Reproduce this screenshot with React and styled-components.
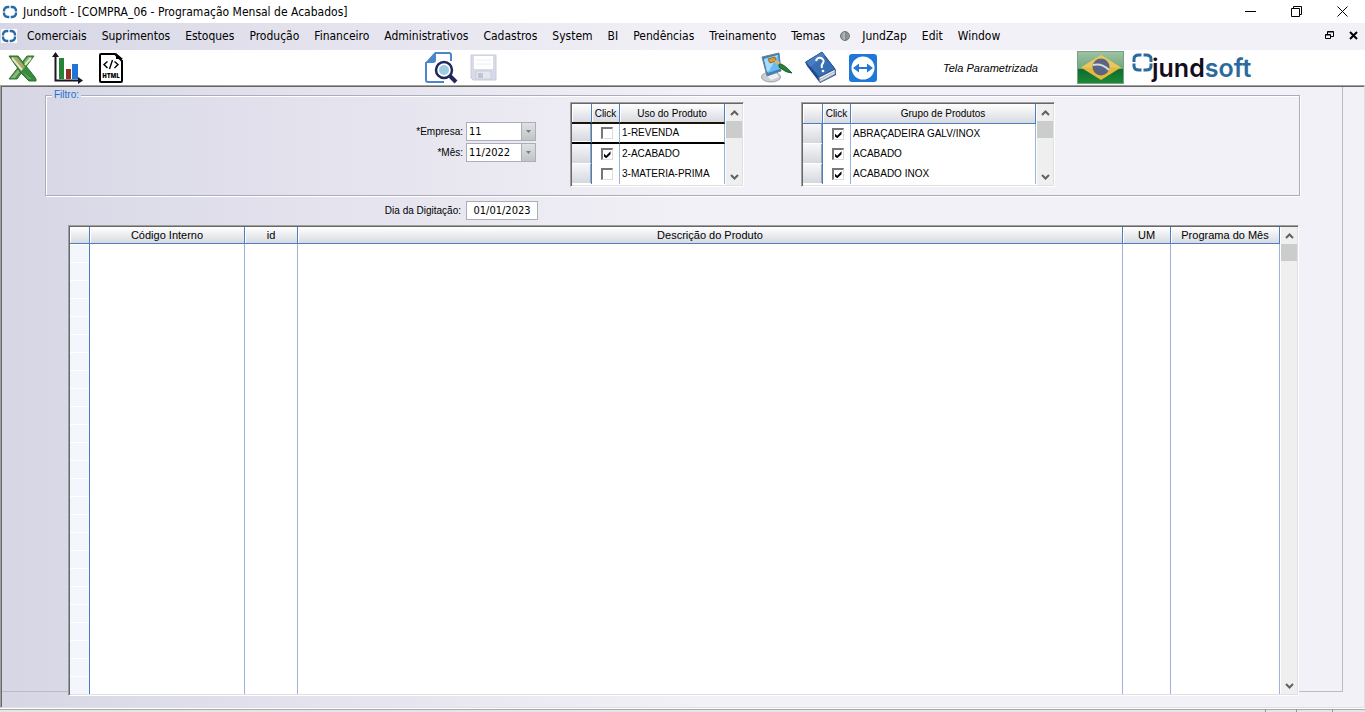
import React, { useState } from 'react';
import styled, { createGlobalStyle, css } from 'styled-components';

const uiFont = '"DejaVu Sans Condensed", "Open Sans", sans-serif';
const formFont = '"Liberation Sans", Arial, sans-serif';
const haze = 'linear-gradient(to right, #d7d6e5 0, #f2f1f7 700px)';

const GlobalStyle = createGlobalStyle`
  *, *::before, *::after { box-sizing: border-box; }
  html, body { margin: 0; background: #fff; }
  button, input, select { font: inherit; color: inherit; margin: 0; }
  button { border: 0; padding: 0; background: none; }
`;

const Window = styled.div`
  display: flex;
  flex-direction: column;
  min-height: 100vh;
  color: #000;
  font: 12px/16px ${uiFont};
`;

const TitleBar = styled.header`
  display: flex;
  align-items: center;
  height: 23px;
  padding-left: 2px;
  gap: 5px;
  background: #fff;
`;

const Title = styled.h1`
  flex: 1;
  margin: 0;
  font-size: 12px;
  font-weight: 400;
  white-space: nowrap;
`;

const WindowControls = styled.div`
  display: flex;
`;

const WindowButton = styled.button`
  display: grid;
  place-items: center;
  width: ${(p) => (p.$small ? '24px' : '46px')};
  height: 20px;
`;

const MenuBar = styled.nav`
  display: flex;
  align-items: center;
  height: 27px;
  padding: 0 0 2px 1px;
  background: ${haze};
`;

const MenuList = styled.div`
  display: flex;
  flex: 1;
  gap: 15px;
  padding-left: 10px;
  white-space: nowrap;
`;

const MenuIcon = styled.span`
  display: flex;
  background: #fff;
`;

const MenuItem = styled.button`
  display: flex;
  align-items: center;
  gap: 12px;
`;

const Dot = styled.span`
  width: 10px;
  height: 10px;
  border: 1px solid #6d7272;
  border-radius: 50%;
  background: linear-gradient(to right, #8d9292, #b9bdbd 50%, #7f8484 51%, #9a9e9e);
`;

const Toolbar = styled.div`
  display: grid;
  grid-template-columns: 417fr 336fr 182fr 134fr 288fr;
  align-items: center;
  height: 35px;
  padding-left: 8px;
  background: #fff;
`;

const ToolGroup = styled.div`
  display: flex;
  align-items: center;
  gap: ${(p) => p.$gap || '12px'};
`;

const ToolButton = styled.button`
  display: flex;
`;

const ScreenTag = styled.em`
  font: italic 11px/14px ${formFont};
  white-space: nowrap;
`;

const Workspace = styled.main`
  display: flex;
  flex: 1;
  padding: 1px 21px 15px 1px;
  border: 1px solid;
  border-color: #a0a0a0 #e0e0e0 #e0e0e0 #a0a0a0;
  box-shadow: inset 1px 1px 0 #656865;
  background: ${haze};
`;

const FormPage = styled.form`
  display: flex;
  flex: 1;
  flex-direction: column;
  min-width: 0;
  padding-top: 1px;
  border: solid #bbbbc1;
  border-width: 0 1px 1px 0;
  font: 10px/14px ${formFont};
`;

const Filter = styled.fieldset`
  height: 108px;
  min-width: 0;
  margin: 0 42px 0 43px;
  padding: 0;
  border: 1px solid #a9aeb8;
  box-shadow: 1px 1px 0 #fff, inset 1px 1px 0 #fff;
`;

const Legend = styled.legend`
  margin-left: 6px;
  padding: 0 2px;
  background: #d9d8e6;
  color: #1b6fd0;
  font-size: 10px;
`;

const FilterBody = styled.div`
  display: flex;
  gap: 57px;
`;

const Fields = styled.div`
  display: flex;
  flex-direction: column;
  gap: 2px;
  width: 490px;
  margin: 20px -23px 0 0;
`;

const FieldRow = styled.div`
  display: grid;
  grid-template-columns: ${(p) => (p.$page ? '459px 72px' : '417px 70px')};
  justify-content: ${(p) => (p.$page ? 'start' : 'end')};
  align-items: center;
  gap: ${(p) => (p.$page ? '5px' : '3px')};
  margin: ${(p) => (p.$page ? '5px 0' : '0')};
`;

const FieldLabel = styled.label`
  text-align: right;
  white-space: nowrap;
`;

const valueBox = css`
  width: 100%;
  height: 19px;
  border: 1px solid #a9aeb8;
  border-radius: 0;
  background: #fff;
  font: 11px/15px ${uiFont};
  outline: none;
`;

const TextInput = styled.input`
  ${valueBox}
  padding: 0;
  text-align: center;
`;

const SelectBox = styled.div`
  position: relative;
`;

const Select = styled.select`
  ${valueBox}
  display: block;
  padding: 0 0 0 2px;
  appearance: none;
`;

const SelectArrow = styled.span`
  position: absolute;
  top: 1px;
  right: 1px;
  bottom: 1px;
  display: grid;
  place-items: center;
  width: 14px;
  border-left: 1px solid #a9aeb8;
  background: linear-gradient(#dfe2e4, #bfc4c4);
  pointer-events: none;
`;

const sunken = css`
  padding: 1px;
  border: 1px solid;
  border-color: #a0a0a0 #fff #fff #a0a0a0;
  box-shadow: inset 1px 1px 0 #656865, inset -1px -1px 0 #e0e0e0;
`;

const SmallFrame = styled.div`
  ${sunken}
  display: flex;
  align-items: stretch;
  width: ${(p) => p.$width};
  height: 85px;
  background: #fff;
`;

const MainFrame = styled.div`
  ${sunken}
  position: relative;
  display: flex;
  flex: 1;
  min-height: 200px;
  margin: 0 43px -5px 66px;
  background: #fff;
`;

const Table = styled.table`
  flex: 1;
  width: 100%;
  min-width: 0;
  height: ${(p) => (p.$fill ? 'auto' : '80px')};
  table-layout: fixed;
  border-collapse: separate;
  border-spacing: 0;
  font-size: ${(p) => (p.$fill ? '11px' : '10px')};
`;

const Col = styled.col`
  width: ${(p) => p.$width};
`;

const HeadCell = styled.th`
  height: ${(p) => (p.$tall ? '20px' : '17px')};
  padding: 0;
  overflow: hidden;
  border-right: 1px solid #4a80c2;
  border-bottom: 1px solid #4a80c2;
  box-shadow: inset 1px 0 0 #fff;
  background: linear-gradient(#fff, #d8dae0);
  font-weight: 400;
  line-height: 15px;
  white-space: nowrap;
  ${(p) => p.$marked && 'border-bottom: 2px solid #1c1408;'}
`;

const BodyRow = styled.tr`
  height: 20px;
  & > td { border-bottom: ${(p) => (p.$marked ? '2px solid #000' : '0')}; }
`;

const Cell = styled.td`
  height: ${(p) => (p.$fill ? 'auto' : '20px')};
  padding: 0 0 0 2px;
  border-right: 1px solid #98b3dc;
  line-height: 14px;
  text-align: ${(p) => (p.$center ? 'center' : 'left')};
  white-space: nowrap;
`;

const SelectorCell = styled.td`
  padding: 0;
  border-right: 1px solid #4a80c2;
  background: linear-gradient(#f6f7f9, #d3d6dc);
  box-shadow: inset 0 -1px 0 #fff, inset -1px 0 0 #a0a3a8;
`;

const SelectorColumn = styled.td`
  padding: 0;
  border-right: 1px solid #4a80c2;
  background: repeating-linear-gradient(#fff 0, #fff 1px, #f3f6fc 1px, #f3f6fc 18px);
`;

const Checkbox = styled.input`
  display: inline-grid;
  place-items: center;
  width: 12px;
  height: 12px;
  vertical-align: middle;
  appearance: none;
  border: solid;
  border-width: 2px 1px 1px 2px;
  border-color: #74777b #dcdcdc #dcdcdc #74777b;
  background: #fff;
  &:checked::before {
    content: '';
    width: 7px;
    height: 7px;
    background: #000;
    clip-path: polygon(0 28%, 38% 62%, 100% 0, 100% 40%, 38% 100%, 0 68%);
  }
`;

const ScrollTrack = styled.div`
  display: flex;
  flex-direction: column;
  width: 17px;
  border-left: 1px solid #fff;
  background: #efefef;
`;

const ScrollButton = styled.button`
  display: grid;
  place-items: center;
  height: 17px;
`;

const ScrollThumb = styled.div`
  height: 17px;
  margin-bottom: auto;
  background: #cbcccc;
`;

const StatusBar = styled.footer`
  display: flex;
  justify-content: flex-end;
  height: 4px;
  border-top: 1px solid #fff;
  background: #e2e6e9;
  box-shadow: inset 0 1px 0 #a6abb0;
`;

const StatusPane = styled.span`
  width: ${(p) => p.$width};
  border-left: 1px solid #8f9499;
`;

const RingIcon = () => (
  <svg width="16" height="14" viewBox="0 0 16 14" fill="none" stroke="#286aa4" strokeWidth="2.4" aria-hidden="true">
    <path d="M7.300 2H6Q2 2 2 6v.5M8.700 2H10q4 0 4 4v.5M7.300 12H6q-4 0-4-4v-.5M8.700 12H10q4 0 4-4v-.5" />
  </svg>
);

const ExcelIcon = () => (
  <svg width="29" height="28" viewBox="0 0 29 28" aria-hidden="true">
    <path d="M19 2h7L9 25H1z" fill="#3f8d45" stroke="#2e7d36" />
    <path d="M20 3h4L7 24H3z" fill="#8fb57c" />
    <path d="M1 2h9l16 20 2 3v2h-7L13 19z" fill="#388a3d" stroke="#287030" />
    <path d="M3 3h6l8 10-4 4z" fill="#a5a86a" />
    <path d="M4 4l10 12M17 11l6-7" fill="none" stroke="#e8e4c0" strokeWidth="2" />
    <path d="M15 18l9 7h-4z" fill="#5aa552" />
  </svg>
);

const ChartIcon = () => (
  <svg width="31" height="33" viewBox="0 0 31 33" aria-hidden="true">
    <path d="M7 7h5v21H7z" fill="#238636" />
    <path d="M14 18h5v10h-5z" fill="#94301f" />
    <path d="M20 13h6v15h-6z" fill="#1f74da" />
    <path d="M3.500 4v25.500H27" fill="none" stroke="#1a1424" strokeWidth="2" />
    <path d="M0 6l3.500-5L7 6zM26 26l5 3.500-5 3.500z" fill="#1a1424" />
  </svg>
);

const HtmlIcon = () => (
  <svg width="26" height="32" viewBox="0 0 26 32" aria-hidden="true">
    <path d="M3 2h14l7 7v20q0 1-1 1H3q-1 0-1-1V3q0-1 1-1z" fill="#fff" stroke="#000" strokeWidth="2" />
    <path d="M18 1l7 6h-7z" fill="#000" />
    <path d="M9.500 9.500L6 12.500l3.500 3.500M16.500 9.500l3.500 3-3.500 3.500M14.500 8l-3 9" fill="none" stroke="#000" strokeWidth="1.400" />
    <text x="13" y="26" textAnchor="middle" fontFamily="Open Sans, sans-serif" fontSize="6" fontWeight="800">HTML</text>
  </svg>
);

const PreviewIcon = () => (
  <svg width="33" height="33" viewBox="0 0 33 33" aria-hidden="true">
    <path d="M10 2h14q2 0 2 2v6M19 31H3q-2 0-2-2V11" fill="none" stroke="#4b87ca" strokeWidth="2" />
    <path d="M0 12L10 1h1v8q0 3-3 3z" fill="#4b87ca" />
    <path d="M25 25l6 6" stroke="#20295c" strokeWidth="4" />
    <circle cx="19" cy="19" r="8" fill="#fff" stroke="#20295c" strokeWidth="2.500" />
    <circle cx="19" cy="19" r="5" fill="#9ecbe4" />
  </svg>
);

const SaveIcon = () => (
  <svg width="27" height="27" viewBox="0 0 27 27" aria-hidden="true">
    <path d="M1 1h25v25H3l-2-2z" fill="#d8dbe7" stroke="#c9cddb" />
    <path d="M4 2h19v13H4z" fill="#fff" />
    <path d="M6 6h15M6 10h15" stroke="#eceef4" />
    <path d="M6 17h15v8H6z" fill="#e5e7ee" stroke="#c9cddb" />
    <path d="M8 19h5v5H8z" fill="#c0c5d4" />
  </svg>
);

const PaintIcon = () => (
  <svg width="32" height="32" viewBox="0 0 32 32" aria-hidden="true">
    <ellipse cx="10" cy="25" rx="9.500" ry="5" fill="#cbd0d6" stroke="#9ba2aa" />
    <path d="M4 22l10-3 4 6-8 3z" fill="#eef0f3" />
    <path d="M1 5l17-4 2 18-14 5z" fill="#3a7fc0" stroke="#707e8b" />
    <path d="M3 7l14-4 2 14-12 4z" fill="#69baf4" />
    <path d="M3 7l14-4-9 16-2 1z" fill="#a8dcff" />
    <path d="M7 7l7-2 1 4-6 2z" fill="#d99d38" stroke="#996a20" />
    <path d="M14 9l7 5" stroke="#d9b383" strokeWidth="3" />
    <path d="M18 12q4-1 13 9-6 0-13-6z" fill="#26843a" stroke="#176327" />
  </svg>
);

const HelpBookIcon = () => (
  <svg width="32" height="33" viewBox="0 0 32 33" aria-hidden="true">
    <path d="M0 11L17 1l14 18v5L15 32 2 15z" fill="#1d4788" />
    <path d="M14 26l16-8v5l-15 8z" fill="#e5e8ed" stroke="#8c9aac" />
    <path d="M15 28.500l15-8" stroke="#a7b0bd" />
    <path d="M1 11L17 1l13 17-16 8z" fill="#376fb4" stroke="#24518f" />
    <path d="M1 11L17 1l3 4L5 16z" fill="#5c90cc" opacity=".5" />
    <path d="M11 10q1-4 5-3 4 2 2 5-2 2-1 5" fill="none" stroke="#fff" strokeWidth="2" />
    <circle cx="18" cy="20" r="1.300" fill="#fff" />
  </svg>
);

const RemoteIcon = () => (
  <svg width="28" height="28" viewBox="0 0 28 28" aria-hidden="true">
    <rect width="28" height="28" rx="3" fill="#1f77d8" />
    <circle cx="14" cy="14" r="11.500" fill="#fff" />
    <path d="M4 14l6-4.500V13h8V9.500l6 4.500-6 4.500V15h-8v3.500z" fill="#2278d6" />
  </svg>
);

const FlagIcon = () => (
  <svg width="47" height="33" viewBox="0 0 47 33" role="img" aria-label="Brasil">
    <defs>
      <linearGradient id="flag" x1="0" y1="0" x2="0" y2="1">
        <stop offset="0" stopColor="#9fc3a5" /><stop offset=".54" stopColor="#6fa77c" />
        <stop offset=".55" stopColor="#0f6b32" /><stop offset="1" stopColor="#1c8a34" />
      </linearGradient>
    </defs>
    <rect x=".5" y=".5" width="46" height="32" fill="url(#flag)" stroke="#79a283" />
    <path d="M24 4l20 12.500L24 29 4 16.500z" fill="#e6b83e" />
    <path d="M24 4l20 12.500H4z" fill="#e8c763" />
    <circle cx="24" cy="16" r="8.500" fill="#5c6580" />
    <path d="M16 14q9-2 16 5" fill="none" stroke="#d5dae2" strokeWidth="2" />
  </svg>
);

const LogoIcon = () => (
  <svg width="122" height="33" viewBox="0 0 122 33" role="img" aria-label="jundsoft">
    <path d="M9.500 4H7Q2 4 2 8v3M11.500 4H14q5 0 5 4v3M9.500 19H7q-5 0-5-4v-2.500M11.500 19H14q5 0 5-4v-2.500" fill="none" stroke="#2b6a9c" strokeWidth="3" />
    <text x="20" y="26" fontFamily="Inter, sans-serif" fontSize="25" fontWeight="600" fill="#120c1c">
      jund<tspan fill="#2b6a9c">soft</tspan>
    </text>
  </svg>
);

const Glyph = ({ d, size = 11, width = 1 }) => (
  <svg width={size} height={size} viewBox={`0 0 ${size} ${size}`} fill="none" stroke="#000" strokeWidth={width} aria-hidden="true">
    <path d={d} />
  </svg>
);

const Chevron = ({ down }) => (
  <svg width="9" height="6" viewBox="0 0 9 6" fill="none" stroke="#606060" strokeWidth="2" aria-hidden="true">
    <path d={down ? 'M1 1l3.500 3.500L8 1' : 'M1 5l3.500-3.500L8 5'} />
  </svg>
);

const Scrollbar = () => (
  <ScrollTrack>
    <ScrollButton type="button" aria-label="Rolar para cima"><Chevron /></ScrollButton>
    <ScrollThumb />
    <ScrollButton type="button" aria-label="Rolar para baixo"><Chevron down /></ScrollButton>
  </ScrollTrack>
);

const menus = ['Comerciais', 'Suprimentos', 'Estoques', 'Produção', 'Financeiro', 'Administrativos', 'Cadastros', 'System', 'BI', 'Pendências', 'Treinamento', 'Temas', 'JundZap', 'Edit', 'Window'];

const Combo = ({ id, label, value }) => (
  <FieldRow>
    <FieldLabel htmlFor={id}>{label}</FieldLabel>
    <SelectBox>
      <Select id={id} defaultValue={value}><option>{value}</option></Select>
      <SelectArrow>
        <svg width="5" height="3" viewBox="0 0 5 3" aria-hidden="true"><path d="M0 0h5L2.500 3z" fill="#777d80" /></svg>
      </SelectArrow>
    </SelectBox>
  </FieldRow>
);

const CheckGrid = ({ id, title, width, items, marked }) => {
  const [rows, setRows] = useState(items);
  const toggle = (n) => setRows(rows.map((r, i) => (i === n ? [r[0], !r[1]] : r)));
  return (
    <SmallFrame $width={width}>
      <Table>
        <colgroup><Col $width="20px" /><Col $width="28px" /><Col /></colgroup>
        <thead>
          <tr>
            <HeadCell $tall $marked={marked === 0} />
            <HeadCell $tall $marked={marked === 0}>Click</HeadCell>
            <HeadCell $tall $marked={marked === 0}>{title}</HeadCell>
          </tr>
        </thead>
        <tbody>
          {rows.map(([name, on], i) => (
            <BodyRow key={name} $marked={marked === i}>
              <SelectorCell />
              <Cell $center><Checkbox type="checkbox" id={`${id}${i}`} checked={on} onChange={() => toggle(i)} /></Cell>
              <Cell><label htmlFor={`${id}${i}`}>{name}</label></Cell>
            </BodyRow>
          ))}
        </tbody>
      </Table>
      <Scrollbar />
    </SmallFrame>
  );
};

export default function App() {
  return (
    <Window>
      <GlobalStyle />
      <TitleBar>
        <RingIcon />
        <Title>Jundsoft - [COMPRA_06 - Programação Mensal de Acabados]</Title>
        <WindowControls>
          <WindowButton aria-label="Minimizar"><Glyph d="M0 5.500h11" /></WindowButton>
          <WindowButton aria-label="Restaurar"><Glyph d="M.5 2.500h8v8h-8zM2.500 2.500v-2h8v8h-2" /></WindowButton>
          <WindowButton aria-label="Fechar"><Glyph d="M.5.5l10 10M10.500.5l-10 10" /></WindowButton>
        </WindowControls>
      </TitleBar>
      <MenuBar>
        <MenuIcon><RingIcon /></MenuIcon>
        <MenuList>
          {menus.map((m) => <MenuItem key={m}>{m === 'JundZap' && <Dot />}{m}</MenuItem>)}
        </MenuList>
        <WindowButton $small aria-label="Restaurar tela"><Glyph size={9} d="M.5 3.500h5v4h-5zM.5 4h5M2.500 3V.5h6v5H6M2.500 1h6" /></WindowButton>
        <WindowButton $small aria-label="Fechar tela"><Glyph size={9} width={2} d="M1 1l7 7M8 1L1 8" /></WindowButton>
      </MenuBar>
      <Toolbar>
        <ToolGroup $gap="15px">
          <ToolButton aria-label="Excel"><ExcelIcon /></ToolButton>
          <ToolButton aria-label="Gráfico"><ChartIcon /></ToolButton>
          <ToolButton aria-label="HTML"><HtmlIcon /></ToolButton>
        </ToolGroup>
        <ToolGroup>
          <ToolButton aria-label="Visualizar"><PreviewIcon /></ToolButton>
          <ToolButton aria-label="Salvar" disabled><SaveIcon /></ToolButton>
        </ToolGroup>
        <ToolGroup>
          <ToolButton aria-label="Personalizar"><PaintIcon /></ToolButton>
          <ToolButton aria-label="Ajuda"><HelpBookIcon /></ToolButton>
          <ToolButton aria-label="Acesso remoto"><RemoteIcon /></ToolButton>
        </ToolGroup>
        <ScreenTag>Tela Parametrizada</ScreenTag>
        <ToolGroup $gap="8px"><FlagIcon /><LogoIcon /></ToolGroup>
      </Toolbar>
      <Workspace>
        <FormPage>
          <Filter>
            <Legend>Filtro:</Legend>
            <FilterBody>
              <Fields>
                <Combo id="empresa" label="*Empresa:" value="11" />
                <Combo id="mes" label="*Mês:" value="11/2022" />
              </Fields>
              <CheckGrid id="uso" title="Uso do Produto" width="174px" marked={0}
                items={[['1-REVENDA', false], ['2-ACABADO', true], ['3-MATERIA-PRIMA', false]]} />
              <CheckGrid id="grupo" title="Grupo de Produtos" width="254px"
                items={[['ABRAÇADEIRA GALV/INOX', true], ['ACABADO', true], ['ACABADO INOX', true]]} />
            </FilterBody>
          </Filter>
          <FieldRow $page>
            <FieldLabel htmlFor="dia">Dia da Digitação:</FieldLabel>
            <TextInput id="dia" defaultValue="01/01/2023" />
          </FieldRow>
          <MainFrame>
            <Table $fill>
              <colgroup>
                <Col $width="20px" /><Col $width="155px" /><Col $width="53px" /><Col /><Col $width="48px" /><Col $width="109px" />
              </colgroup>
              <thead>
                <tr>
                  <HeadCell />
                  <HeadCell>Código Interno</HeadCell>
                  <HeadCell>id</HeadCell>
                  <HeadCell>Descrição do Produto</HeadCell>
                  <HeadCell>UM</HeadCell>
                  <HeadCell>Programa do Mês</HeadCell>
                </tr>
              </thead>
              <tbody>
                <tr>
                  <SelectorColumn />
                  <Cell $fill /><Cell $fill /><Cell $fill /><Cell $fill /><Cell $fill />
                </tr>
              </tbody>
            </Table>
            <Scrollbar />
          </MainFrame>
        </FormPage>
      </Workspace>
      <StatusBar>
        <StatusPane $width="31px" /><StatusPane $width="36px" /><StatusPane $width="33px" />
      </StatusBar>
    </Window>
  );
}
